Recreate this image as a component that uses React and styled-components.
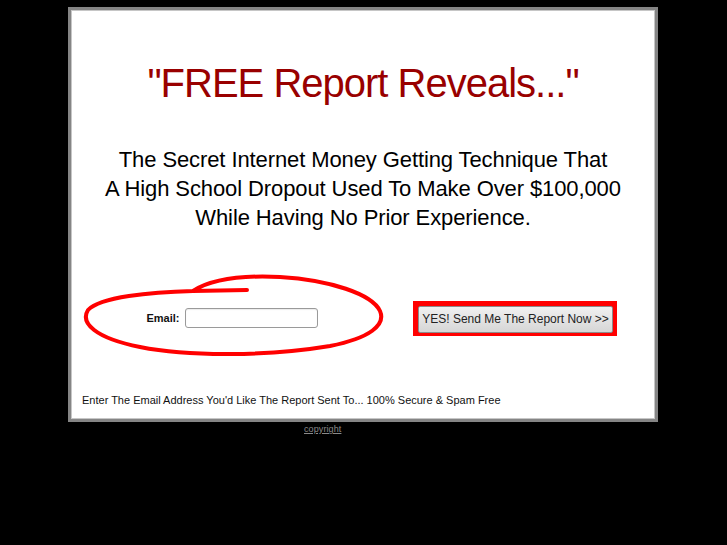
import React from "react";
import styled, { createGlobalStyle } from "styled-components";

const GlobalStyle = createGlobalStyle`
  html, body {
    margin: 0;
    padding: 0;
    background: #000;
  }
  body {
    font-family: "Liberation Sans", Arial, sans-serif;
  }
`;

const Page = styled.div`
  background: #000;
  min-height: 545px;
  padding-top: 7px;
  box-sizing: border-box;
`;

const Box = styled.div`
  width: 590px;
  height: 415px;
  margin: 0 0 0 68px;
  box-sizing: border-box;
  background: #fff;
  border: 3px solid #858585;
  box-shadow: inset 0 0 0 1px #c6c6c6;
  display: flex;
  flex-direction: column;
`;

const Headline = styled.h1`
  margin: 49px 0 0;
  font-size: 40px;
  line-height: 48px;
  font-weight: normal;
  letter-spacing: -1px;
  color: #990000;
  text-align: center;
`;

const Subhead = styled.p`
  margin: 38px 0 0;
  font-size: 22px;
  line-height: 29px;
  letter-spacing: -0.1px;
  color: #000;
  text-align: center;
`;

const FormRow = styled.form`
  margin: 44px 0 0;
  padding-left: 13px;
  display: flex;
  align-items: center;
  gap: 29px;
`;

const Circled = styled.div`
  position: relative;
  width: 300px;
  height: 84px;
  display: flex;
  align-items: center;
  justify-content: center;
  gap: 5px;
  padding-right: 4px;
  box-sizing: border-box;
`;

const Scribble = styled.svg`
  position: absolute;
  left: 0;
  top: 0;
  overflow: visible;
  pointer-events: none;
`;

const Label = styled.label`
  font-size: 11px;
  font-weight: bold;
  color: #111;
`;

const Input = styled.input`
  width: 133px;
  height: 20px;
  box-sizing: border-box;
  border: 1px solid #9a9a9a;
  border-radius: 3px;
  box-shadow: inset 0 1px 1px rgba(0, 0, 0, 0.08);
  padding: 0 4px;
  font-size: 11px;
  font-family: inherit;
  outline: none;
`;

const ButtonFrame = styled.div`
  background: #ff0000;
  padding: 5px 4px 3px 5px;
  display: flex;
`;

const Button = styled.button`
  width: 195px;
  height: 27px;
  border: 1px solid #8c8c8c;
  border-radius: 2px;
  background: linear-gradient(#f0f0f0, #d6d6d6);
  font-family: inherit;
  font-size: 12px;
  color: #222;
  padding: 0;
  cursor: pointer;
`;

const Note = styled.p`
  margin: 33px 0 0;
  padding-left: 11px;
  font-size: 11px;
  line-height: 14px;
  color: #111;
`;

const Footer = styled.div`
  width: 590px;
  margin: 0 0 0 68px;
  padding-left: 236px;
  box-sizing: border-box;
  line-height: 9px;
`;

const Copyright = styled.a`
  font-size: 9px;
  letter-spacing: 0.1px;
  color: #8a8a8a;
  text-decoration: underline;
`;

const Ellipse = () => (
  <Scribble width="300" height="84" viewBox="0 0 300 84">
    <g transform="translate(-84,-276)">
      <path
        d="M247,290 L193,291 C150,292 100,297 88,310 C80,323 95,338 140,347 C190,357 270,356 330,346 C370,338 386,325 380,311 C372,294 330,280 280,277 C240,275 210,280 193,291"
        fill="none"
        stroke="#ff0000"
        strokeWidth="4"
        strokeLinecap="round"
        strokeLinejoin="round"
      />
    </g>
  </Scribble>
);

const App = () => {
  return (
    <Page>
      <GlobalStyle />
      <Box>
        <Headline>"FREE Report Reveals..."</Headline>
        <Subhead>
          The Secret Internet Money Getting Technique That
          <br />
          A High School Dropout Used To Make Over $100,000
          <br />
          While Having No Prior Experience.
        </Subhead>
        <FormRow onSubmit={e => e.preventDefault()}>
          <Circled>
            <Ellipse />
            <Label htmlFor="email">Email:</Label>
            <Input id="email" type="text" />
          </Circled>
          <ButtonFrame>
            <Button type="submit">YES! Send Me The Report Now &gt;&gt;</Button>
          </ButtonFrame>
        </FormRow>
        <Note>
          Enter The Email Address You'd Like The Report Sent To... 100% Secure
          &amp; Spam Free
        </Note>
      </Box>
      <Footer>
        <Copyright href="#">copyright</Copyright>
      </Footer>
    </Page>
  );
};

export default App;
